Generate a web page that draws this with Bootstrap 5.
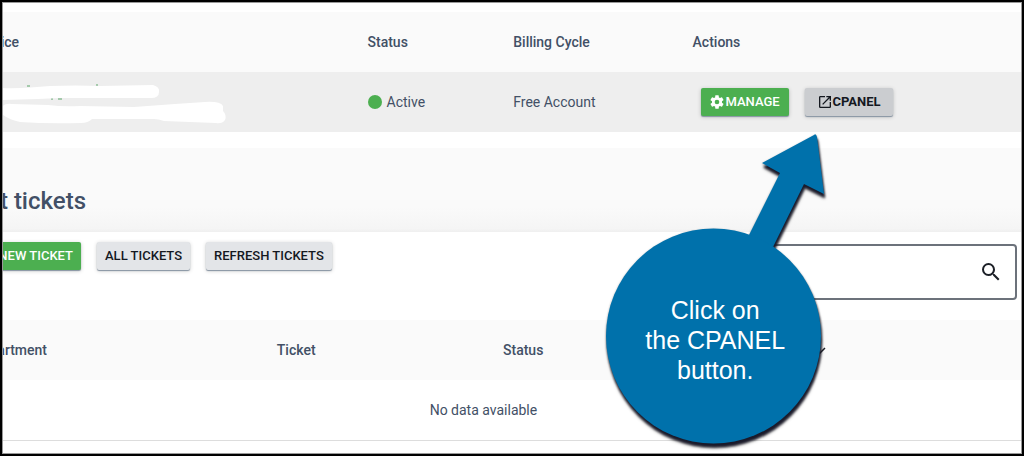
<!DOCTYPE html>
<html lang="en">
<head>
<meta charset="utf-8">
<meta name="viewport" content="width=device-width, initial-scale=1">
<title>Support tickets</title>
<link href="https://cdn.jsdelivr.net/npm/bootstrap@5.3.0/dist/css/bootstrap.min.css" rel="stylesheet">
<style>
  body { font-family: Roboto, sans-serif; font-size: 14px; line-height: 20px; color: #425066; background: #fff; }
  .frame { border: 2px solid #000; border-right-width: 3px; outline: 1px solid #999; outline-offset: -3px; min-height: 100vh; padding-top: 10px; }
  .data-table { table-layout: fixed; width: 100%; }
  .data-table th, .data-table td { height: 60px; padding: 0 16px; vertical-align: middle; }
  .data-table th { font-weight: 500; background: #fafafa; }
  .data-table th:first-child, .data-table td:first-child { padding-left: 0; }
  .hot-row { background: #eee; }
  .clip-start { display: flex; justify-content: flex-end; overflow: hidden; white-space: nowrap; }
  .clip-short { width: 17px; }
  .clip-col { width: 45px; }
  .clip-title { width: 84px; font-size: 24px; line-height: 34px; font-weight: 500; }
  .heading-band { height: 84px; padding-top: 36px; background: linear-gradient(#fafafa 70%, #f5f5f5 96%, #efefef); }
  .act { display: inline-flex; align-items: center; justify-content: center; height: 28px; padding: 0 8px; border: 0; border-radius: 2px; font-size: 13px; font-weight: 500; white-space: nowrap; color: #14181f; background: #e3e5e8; box-shadow: 0 1px 1px #8794a2, 0 1px 4px #0003; }
  .act-go { color: #fff; background: #4caf50; }
  .act-dark { background: #cbcdd0; font-weight: 700; }
  .act-row { width: 88px; }
  .act-cut { width: 79px; padding: 0 8px 0 0; justify-content: flex-end; overflow: hidden; border-radius: 0 2px 2px 0; }
  .dot { width: 14px; height: 14px; border-radius: 50%; background: #4caf50; }
  .dot-label { gap: 5px; }
  .toolbar { min-height: 88px; padding: 10px 4px 20px 0; }
  .find { width: 34%; height: 56px; margin-top: 2px; border: 2px solid #6c727b; border-radius: 4px; }
  .find input { outline: 0; min-width: 0; }
  .sort-mark { margin-left: 36px; }
  .last-row td { border-bottom: 1px solid #ddd; }
  .callout { left: 59.2%; top: 132px; width: 220px; height: 320px; pointer-events: none; }
  .callout-art { filter: drop-shadow(1px 4px 1px #1a1a2a) drop-shadow(0 1px 1px #0006); }
  .callout-text { top: 161px; left: 0; width: 220px; font-family: "Liberation Sans", Arial, sans-serif; font-size: 25px; line-height: 30px; color: #fff; }
</style>
</head>
<body>
<main class="frame position-relative overflow-hidden">
  <table class="data-table">
    <colgroup><col style="width:34.3%"><col style="width:14.3%"><col style="width:17.6%"><col></colgroup>
    <thead>
      <tr><th><span class="clip-start clip-short">ice</span></th><th>Status</th><th>Billing Cycle</th><th>Actions</th></tr>
    </thead>
    <tbody>
      <tr class="hot-row">
        <td>
          <svg class="d-block" width="226" height="60" viewBox="2 0 226 60" fill="#fff" aria-hidden="true">
            <path d="M27 14h3M96 13h2M51 27h2m5 0h4" stroke="#5aa469"/>
            <path d="M2 16C18 17 34 15 50 14Q76 13 100 14L153 13Q160 15 159 20Q159 26 151 26L110 26L83 26Q70 26 59 26L38 27L2 28Z"/>
            <path d="M2 35Q5 31 12 32L48 33Q64 35 80 34L134 35L175 32L205 30Q220 29 223 34L223 39Q227 43 225 48Q222 52 216 51L164 49Q158 47 154 47L92 47Q88 51 81 51Q48 52 20 50Q10 48 3 43Z"/>
          </svg>
        </td>
        <td><span class="dot-label d-flex align-items-center"><span class="dot"></span><span>Active</span></span></td>
        <td>Free Account</td>
        <td class="ps-4">
          <div class="d-flex gap-3">
            <button type="button" class="act act-go act-row">
              <svg width="16" height="16" viewBox="0 0 24 24" fill="currentColor" aria-hidden="true"><path d="M12 15.5A3.5 3.5 0 1 1 12 8.500a3.500 3.500 0 0 1 0 7m7.430-2.530c.04-.32.07-.64.07-.97s-.03-.66-.07-1l2.110-1.630c.19-.15.24-.42.12-.64l-2-3.460c-.12-.22-.39-.31-.61-.22l-2.490 1c-.52-.39-1.060-.73-1.690-.98l-.37-2.650A.506.506 0 0 0 14 2h-4c-.25 0-.46.18-.5.42l-.37 2.650c-.63.25-1.170.59-1.690.98l-2.490-1c-.22-.09-.49 0-.61.22l-2 3.460c-.13.22-.07.49.12.64L4.570 11c-.04.34-.07.67-.07 1s.03.65.07.97l-2.110 1.660c-.19.15-.25.42-.12.64l2 3.460c.12.22.39.3.61.22l2.490-1.010c.52.4 1.060.74 1.690.99l.37 2.650c.04.24.25.42.5.42h4c.25 0 .46-.18.5-.42l.37-2.650c.63-.26 1.170-.59 1.690-.99l2.490 1.010c.22.08.49 0 .61-.22l2-3.460c.12-.22.07-.49-.12-.64z"/></svg>MANAGE
            </button>
            <button type="button" class="act act-dark act-row">
              <svg width="16" height="16" viewBox="0 0 24 24" fill="currentColor" aria-hidden="true"><path d="M14 3v2h3.590l-9.830 9.830 1.410 1.410L19 6.410V10h2V3m-2 16H5V5h7V3H5c-1.110 0-2 .9-2 2v14a2 2 0 0 0 2 2h14a2 2 0 0 0 2-2v-7h-2z"/></svg>CPANEL
            </button>
          </div>
        </td>
      </tr>
    </tbody>
  </table>

  <header class="heading-band mt-3"><h2 class="clip-start clip-title mb-0">t tickets</h2></header>

  <div class="toolbar d-flex align-items-start justify-content-between">
    <div class="d-flex gap-3">
      <button type="button" class="act act-go act-cut">NEW TICKET</button>
      <button type="button" class="act">ALL TICKETS</button>
      <button type="button" class="act">REFRESH TICKETS</button>
    </div>
    <label class="find d-flex align-items-center pe-2">
      <input type="search" class="border-0 bg-transparent flex-grow-1 h-100" aria-label="Search tickets">
      <svg class="mx-1" width="24" height="24" viewBox="0 0 24 24" fill="#1c2027" aria-hidden="true"><path d="M9.500 3A6.500 6.500 0 0 1 16 9.500c0 1.610-.59 3.090-1.560 4.230l.27.270h.79l5 5-1.500 1.500-5-5v-.79l-.27-.27A6.516 6.516 0 0 1 9.500 16 6.500 6.500 0 0 1 3 9.500 6.500 6.500 0 0 1 9.500 3m0 2C7 5 5 7 5 9.500S7 14 9.500 14 14 12 14 9.500 12 5 9.500 5z"/></svg>
    </label>
  </div>

  <table class="data-table">
    <colgroup><col style="width:25.4%"><col style="width:22.2%"><col style="width:27%"><col></colgroup>
    <thead>
      <tr>
        <th><span class="clip-start clip-col">artment</span></th><th>Ticket</th><th>Status</th>
        <th><svg class="sort-mark" width="12" height="8" viewBox="0 0 12 8" fill="none" stroke="#1c2027" stroke-width="1.500" aria-hidden="true"><path d="M1 1l5 5 5-5"/></svg></th>
      </tr>
    </thead>
    <tbody><tr class="last-row"><td colspan="4"><div class="text-center" style="width:96%">No data available</div></td></tr></tbody>
  </table>

  <div class="callout position-absolute">
    <svg class="callout-art d-block overflow-visible" width="220" height="320" viewBox="605 134 220 320" fill="#0071ab" aria-hidden="true">
      <path d="M814 135Q816 133 817 137L824 194L804 184L773 247L748 237L780 173L762 163Z"/>
      <circle cx="713.500" cy="336" r="107.500"/>
    </svg>
    <div class="callout-text position-absolute text-center">Click on<br>the CPANEL<br>button.</div>
  </div>
</main>
<script src="https://cdn.jsdelivr.net/npm/bootstrap@5.3.0/dist/js/bootstrap.bundle.min.js"></script>
</body>
</html>
